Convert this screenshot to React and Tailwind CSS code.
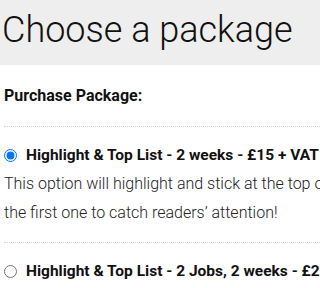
import React from 'react';

const Radio = ({ checked }) => (
  <input
    type="radio"
    name="package"
    defaultChecked={checked}
    className="w-[13px] h-[13px] m-0 shrink-0 accent-[#0075ff]"
  />
);

const App = () => {
  return (
    <div className="w-screen h-screen overflow-hidden bg-white font-['Roboto',sans-serif] text-[#111]">
      {/* Page title band */}
      <div className="h-[65px] bg-[#eeeeee] pl-[2px] pt-[12px]">
        <h1 className="text-[36px] leading-[36px] font-light whitespace-nowrap">Choose a package</h1>
      </div>

      <div className="pl-[4px] whitespace-nowrap">
        <p className="mt-[21px] text-[16px] leading-[20px] font-bold">Purchase Package:</p>

        <div className="mt-[20px] border-t border-dotted border-[#d6d6d6]"></div>

        {/* Option 1 */}
        <label className="mt-[16px] flex items-center gap-[9px] h-[24px]">
          <Radio checked />
          <span className="text-[15.5px] leading-[24px] font-bold">Highlight &amp; Top List - 2 weeks - £15 + VAT</span>
        </label>
        <p className="mt-[2px] text-[16px] leading-[29px] font-light text-[#222]">
          This option will highlight and stick at the top of the list, making it
          <br />
          the first one to catch readers’ attention!
        </p>

        <div className="mt-[15px] border-t border-dotted border-[#d6d6d6]"></div>

        {/* Option 2 */}
        <label className="mt-[16px] flex items-center gap-[9px] h-[24px]">
          <Radio />
          <span className="text-[15.5px] leading-[24px] font-bold">Highlight &amp; Top List - 2 Jobs, 2 weeks - £25 + VAT</span>
        </label>
      </div>
    </div>
  );
};

export default App;
